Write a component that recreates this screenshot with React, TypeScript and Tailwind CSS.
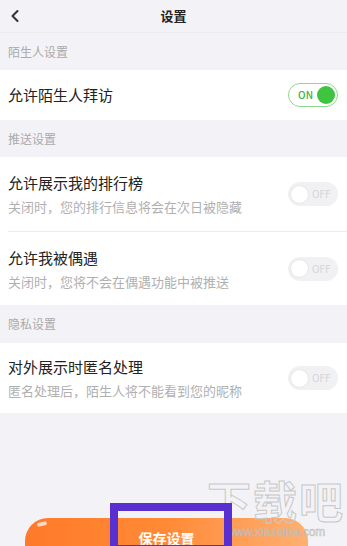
import { ChevronLeft } from "lucide-react";

const font = { fontFamily: '"Noto Sans CJK SC", "Noto Sans", sans-serif' };

const Toggle = ({ on }: { on: boolean }) =>
  on ? (
    <div className="flex h-[24px] w-[50px] items-center justify-end gap-[4px] rounded-full border-[1.5px] border-[#8fd68f] bg-white pr-[2px]">
      <span className="text-[10px] font-medium leading-none text-[#3cb043]">ON</span>
      <span className="h-[18px] w-[18px] rounded-full bg-[#3ec43e]" />
    </div>
  ) : (
    <div className="flex h-[24px] w-[50px] items-center gap-[3px] rounded-full bg-[#f1f1f3] pl-[2px]">
      <span className="h-[19px] w-[19px] rounded-full border border-[#e6e6e6] bg-white" />
      <span className="text-[10px] leading-none text-[#d4d4d4]">OFF</span>
    </div>
  );

const SectionLabel = ({ text, h }: { text: string; h: string }) => (
  <div className={`flex items-center px-[8px] text-[12px] text-[#aaaaaa] ${h}`}>{text}</div>
);

const Row = ({ title, sub, on, h }: { title: string; sub?: string; on: boolean; h: string }) => (
  <div className={`flex items-center justify-between pl-[8px] pr-[9px] ${h}`}>
    <div className="flex flex-col">
      <span className="text-[15px] leading-[20px] text-[#222]">{title}</span>
      {sub && <span className="mt-[5px] text-[13px] leading-[17px] text-[#b0b0b0]">{sub}</span>}
    </div>
    <Toggle on={on} />
  </div>
);

export default function App() {
  return (
    <div className="relative h-[546px] w-[347px] overflow-hidden bg-[#f3f3f7]" style={font}>
      {/* header */}
      <div className="relative flex h-[33px] items-center justify-center border-b border-[#ececf0]">
        <ChevronLeft className="absolute left-[5px] top-[6px] h-[20px] w-[20px] text-[#333]" strokeWidth={2.5} />
        <span className="text-[13px] font-bold text-[#222]">设置</span>
      </div>

      <SectionLabel text="陌生人设置" h="h-[37px]" />
      <div className="bg-white">
        <Row title="允许陌生人拜访" on h="h-[50px]" />
      </div>

      <SectionLabel text="推送设置" h="h-[37px]" />
      <div className="bg-white">
        <Row title="允许展示我的排行榜" sub="关闭时，您的排行信息将会在次日被隐藏" on={false} h="h-[74px]" />
        <div className="ml-[8px] h-px bg-[#ededed]" />
        <Row title="允许我被偶遇" sub="关闭时，您将不会在偶遇功能中被推送" on={false} h="h-[73px]" />
      </div>

      <SectionLabel text="隐私设置" h="h-[38px]" />
      <div className="bg-white">
        <Row title="对外展示时匿名处理" sub="匿名处理后，陌生人将不能看到您的昵称" on={false} h="h-[70px]" />
      </div>

      {/* save button */}
      <div className="mt-[105px] flex justify-center pr-[14px]">
        <div className="relative flex h-[46px] w-[283px] items-start justify-center rounded-t-[23px] bg-gradient-to-r from-[#ff7a2a] via-[#ff8a35] to-[#ffb070] pt-[10px]">
          <span className="absolute left-[12px] top-[4px] h-[4px] w-[10px] -rotate-12 rounded-full bg-white/70" />
          <span className="text-[14px] font-bold text-white">保存设置</span>
        </div>
      </div>

      {/* watermark */}
      <div className="pointer-events-none absolute left-[207px] top-[478px] flex flex-col items-center">
        <span className="text-[44px] font-bold leading-none tracking-[2px] text-transparent [-webkit-text-stroke:1px_#c8c8c8]">下载吧</span>
        <span className="mt-[4px] text-[12px] leading-none text-transparent [-webkit-text-stroke:0.6px_#bdbdbd]" style={{ fontFamily: '"Liberation Sans", sans-serif' }}>
          www.xiazaiba.com
        </span>
      </div>

      {/* annotation box */}
      <div className="pointer-events-none absolute left-[110px] top-[503px] h-[50px] w-[122px] border-[8px] border-[#5a2fd0]" />
    </div>
  );
}
